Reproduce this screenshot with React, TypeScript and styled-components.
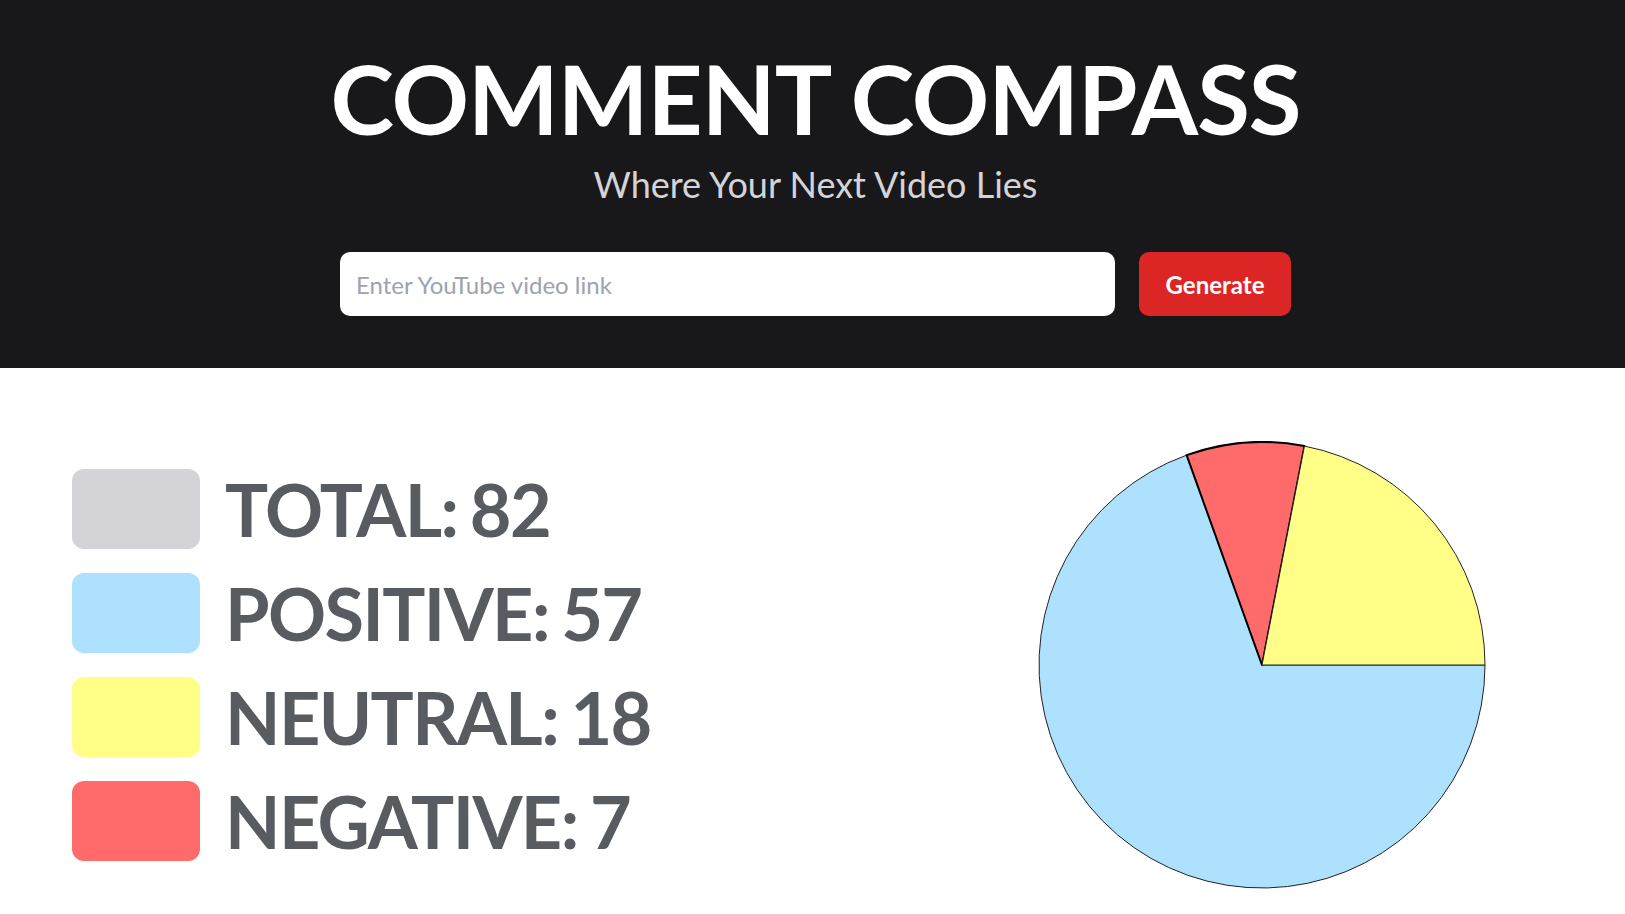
import React from "react";
import styled, { createGlobalStyle } from "styled-components";

const GlobalStyle = createGlobalStyle`
  html, body { margin: 0; padding: 0; background: #ffffff; }
  body { font-family: "Lato", "Inter", sans-serif; }
  * { box-sizing: border-box; }
`;

const Header = styled.header`
  background: #18181b;
  display: flex;
  flex-direction: column;
  align-items: center;
  padding: 50px 0 52px;
`;

const Title = styled.h1`
  margin: 0 0 0 6px;
  font-family: "Lato", sans-serif;
  font-weight: 700;
  font-size: 96px;
  line-height: 1;
  color: #ffffff;
  letter-spacing: -1px;
`;

const Subtitle = styled.p`
  margin: 20px 0 0 6px;
  font-family: "Lato", sans-serif;
  font-weight: 400;
  font-size: 36px;
  line-height: 1;
  color: #d4d4d8;
`;

const Form = styled.form`
  margin: 50px 0 0 6px;
  display: flex;
  gap: 24px;
  width: 951px;
`;

const Input = styled.input`
  flex: 1;
  height: 64px;
  border: none;
  border-radius: 10px;
  background: #ffffff;
  padding: 0 16px;
  font-family: "Lato", sans-serif;
  font-size: 24px;
  color: #18181b;
  outline: none;
  &::placeholder { color: #9ca3af; }
`;

const Button = styled.button`
  width: 152px;
  height: 64px;
  border: none;
  border-radius: 10px;
  background: #dc2626;
  color: #ffffff;
  font-family: "Lato", sans-serif;
  font-weight: 700;
  font-size: 24px;
  cursor: pointer;
`;

const Results = styled.main`
  display: flex;
  justify-content: space-between;
  align-items: center;
  padding: 73px 139px 0 72px;
`;

const Legend = styled.ul`
  list-style: none;
  margin: 0;
  padding: 0;
  display: flex;
  flex-direction: column;
  gap: 24px;
`;

const Row = styled.li`
  display: flex;
  align-items: center;
  gap: 25px;
`;

const Swatch = styled.span<{ $color: string }>`
  width: 128px;
  height: 80px;
  border-radius: 12px;
  background: ${(p) => p.$color};
  flex-shrink: 0;
`;

const Label = styled.span`
  font-family: "Lato", sans-serif;
  font-weight: 700;
  font-size: 72px;
  line-height: 1;
  color: #585c60;
  letter-spacing: -0.022em;
  word-spacing: -0.05em;
  white-space: nowrap;
`;

const ChartBox = styled.div`
  width: 448px;
  height: 448px;
  flex-shrink: 0;
`;

const data = [
  { label: "POSITIVE", value: 57, color: "#aee1fd" },
  { label: "NEUTRAL", value: 18, color: "#ffff88" },
  { label: "NEGATIVE", value: 7, color: "#ff6b6b" },
];

const total = 82;

function Pie() {
  const cx = 224;
  const cy = 224;
  const r = 223;
  const order = [data[0], data[2], data[1]];
  let start = 0;
  const slices = order.map((d) => {
    const sweep = (d.value / total) * Math.PI * 2;
    const a0 = start;
    const a1 = start + sweep;
    start = a1;
    const x0 = cx + r * Math.cos(a0);
    const y0 = cy + r * Math.sin(a0);
    const x1 = cx + r * Math.cos(a1);
    const y1 = cy + r * Math.sin(a1);
    const large = sweep > Math.PI ? 1 : 0;
    const path = `M ${cx} ${cy} L ${x0} ${y0} A ${r} ${r} 0 ${large} 1 ${x1} ${y1} Z`;
    return { ...d, path };
  });
  return (
    <svg width="448" height="448" viewBox="0 0 448 448">
      {slices.map((s) => (
        <path
          key={s.label}
          d={s.path}
          fill={s.color}
          stroke={s.label === "NEGATIVE" ? "#000000" : "#222222"}
          strokeWidth={s.label === "NEGATIVE" ? 2 : 1}
          strokeLinejoin="round"
        />
      ))}
    </svg>
  );
}

export default function App() {
  return (
    <>
      <GlobalStyle />
      <Header>
        <Title>COMMENT COMPASS</Title>
        <Subtitle>Where Your Next Video Lies</Subtitle>
        <Form onSubmit={(e) => e.preventDefault()}>
          <Input type="text" placeholder="Enter YouTube video link" />
          <Button type="submit">Generate</Button>
        </Form>
      </Header>
      <Results>
        <Legend>
          <Row>
            <Swatch $color="#d4d4d8" />
            <Label>TOTAL: {total}</Label>
          </Row>
          {data.map((d) => (
            <Row key={d.label}>
              <Swatch $color={d.color} />
              <Label>
                {d.label}: {d.value}
              </Label>
            </Row>
          ))}
        </Legend>
        <ChartBox>
          <Pie />
        </ChartBox>
      </Results>
    </>
  );
}
